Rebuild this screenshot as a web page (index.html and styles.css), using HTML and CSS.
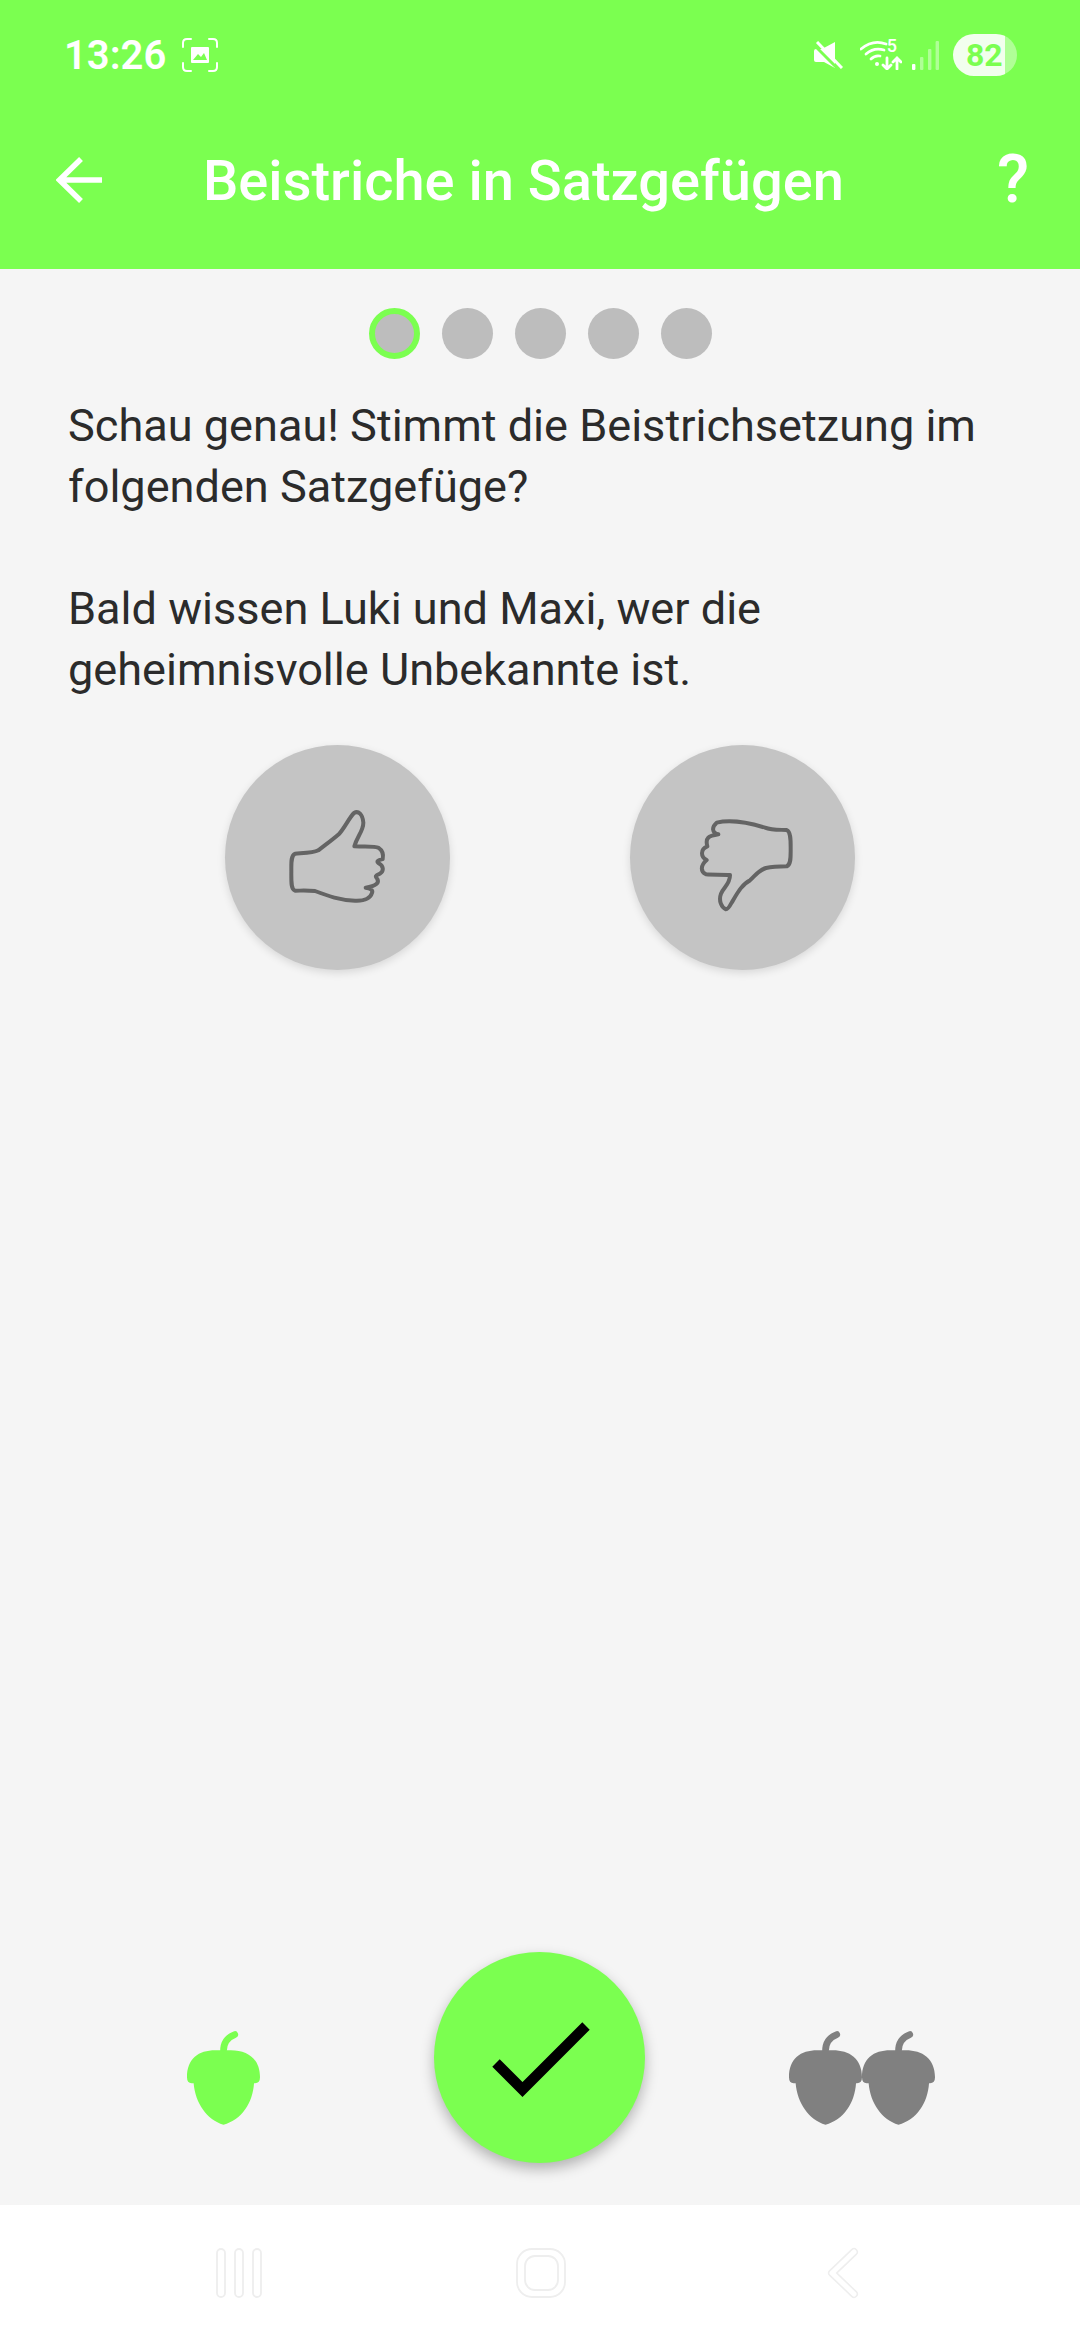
FILE: index.html
```html
<!DOCTYPE html>
<html lang="de">
<head>
	<meta charset="utf-8">
	<meta name="viewport" content="width=device-width, initial-scale=1">
	<title>Beistriche in Satzgefügen</title>
	<link rel="stylesheet" href="styles.css">
</head>
<body>
<svg class="defs" width="0" height="0">
	<symbol id="acorn" viewBox="80 300 220 285">
		<path d="M190 362Q190 326 224 313" fill="none" stroke="currentColor" stroke-width="20" stroke-linecap="round"/>
		<path d="M80 442C80 385 115 360 165 360H212C262 360 300 385 300 442Q300 460 285 460H282C278 520 245 570 190 585C140 570 105 520 100 460H94Q80 460 80 442Z" fill="currentColor"/>
	</symbol>
</svg>

<header class="top">
	<div class="status">
		<span class="time">13:26</span>
		<svg class="shot" viewBox="0 0 36 34" fill="none" stroke="#fff">
			<path d="M1 9V5Q1 1 5 1H9M27 1H31Q35 1 35 5V9M1 25V29Q1 33 5 33H9M27 33H31Q35 33 35 29V25" stroke-width="2" stroke-linecap="round"/>
			<path d="M9 10Q9 9 10 9H26Q27 9 27 10V24Q27 25 26 25H10Q9 25 9 24Z" fill="#fff" stroke="none"/>
			<path d="M11 22L16 16L19 19L22 15L25 22Z" fill="#7bff50" stroke="none"/>
		</svg>
		<div class="status-right">
			<svg class="mute" viewBox="0 0 29 28">
				<path d="M0 10Q0 8 2 8H8L21 1V27L10 21H2Q0 21 0 19Z" fill="#fff"/>
				<path d="M1 3L23 25" stroke="#7bff50" stroke-width="3" transform="translate(-1 1)"/>
				<path d="M3 1L28 27" stroke="#fff" stroke-width="3"/>
			</svg>
			<div class="wifi">
				<svg viewBox="0 0 42 30" fill="none" stroke="#fff" stroke-width="2.800" stroke-linecap="round">
					<path d="M1 9Q13 -1 26 4"/>
					<path d="M6 14Q14 7 24 10"/>
					<path d="M11 19Q15 15 20 16"/>
					<circle cx="17" cy="24" r="2" fill="#fff" stroke="none"/>
					<path d="M27 18V29M23 25L27 29L31 25"/>
					<path d="M37 29V18M33 22L37 18L41 22"/>
				</svg>
				<span class="wifi-gen">5</span>
			</div>
			<svg class="signal" viewBox="0 0 27 29" fill="#fff">
				<rect x="0" y="23" width="3.400" height="6" rx="1"/>
				<rect x="8" y="16" width="3.400" height="13" rx="1" opacity="0.4"/>
				<rect x="16" y="8" width="3.400" height="21" rx="1" opacity="0.4"/>
				<rect x="23.600" y="0" width="3.400" height="29" rx="1" opacity="0.4"/>
			</svg>
			<div class="battery">82</div>
		</div>
	</div>
	<div class="appbar">
		<svg class="back" viewBox="0 0 46 46" fill="none" stroke="#fff" stroke-width="5.500">
			<path d="M46 23H4M25 2L3.500 23L25 44"/>
		</svg>
		<h1 class="title">Beistriche in Satzgefügen</h1>
		<span class="help">?</span>
	</div>
</header>

<main class="content">
	<div class="dots">
		<span class="dot active"></span>
		<span class="dot"></span>
		<span class="dot"></span>
		<span class="dot"></span>
		<span class="dot"></span>
	</div>
	<p class="question">Schau genau! Stimmt die Beistrichsetzung im folgenden Satzgefüge?</p>
	<p class="question">Bald wissen Luki und Maxi, wer die geheimnisvolle Unbekannte ist.</p>
	<div class="answers">
		<button class="answer">
			<svg viewBox="75 72 675 675" fill="none" stroke="#646464" stroke-width="12" stroke-linejoin="round">
				<path d="M285 398C310 396 340 396 355 388C375 372 395 358 418 338C435 318 448 290 462 276C475 268 488 280 490 305C490 330 472 345 463 376C490 377 525 374 535 380C550 390 550 405 548 414C535 418 528 420 535 426C552 435 552 450 540 458C525 464 525 466 532 474C538 485 530 495 497 500C510 502 520 506 516 516C510 535 490 540 465 539C420 538 385 525 345 510C325 508 305 509 285 509C272 505 274 480 274 450C274 425 272 405 285 398Z"/>
			</svg>
		</button>
		<button class="answer">
			<svg viewBox="60 72 675 675" fill="none" stroke="#646464" stroke-width="12" stroke-linejoin="round">
				<path d="M320 305C350 298 400 300 465 320C485 328 510 326 530 327C543 332 542 360 542 385C542 410 543 430 530 436C510 436 490 436 468 441C445 448 435 465 420 478C395 490 380 520 365 545C358 558 352 565 348 565C335 560 325 540 333 518C340 500 360 490 360 462C335 460 310 462 288 460C272 452 270 435 290 417C272 408 270 385 292 376C285 350 295 345 325 340C305 336 305 318 320 305Z"/>
			</svg>
		</button>
	</div>
</main>

<div class="actions">
	<svg class="acorn earned"><use href="#acorn"/></svg>
	<button class="check">
		<svg viewBox="0 0 211 211" fill="none" stroke="#000" stroke-width="10.500">
			<path d="M62 64L88.500 90.500L152 27" transform="translate(0 47)"/>
		</svg>
	</button>
	<div class="acorn-pair">
		<svg class="acorn"><use href="#acorn"/></svg>
		<svg class="acorn"><use href="#acorn"/></svg>
	</div>
</div>

<nav class="navbar">
	<svg class="nav-recent" viewBox="0 0 46 50" fill="none" stroke="#eee" stroke-width="1.800">
		<rect x="1" y="1" width="8" height="48" rx="4"/>
		<rect x="19" y="1" width="8" height="48" rx="4"/>
		<rect x="37" y="1" width="8" height="48" rx="4"/>
	</svg>
	<svg class="nav-home" viewBox="0 0 50 50" fill="none" stroke="#eee" stroke-width="1.800">
		<rect x="1" y="1" width="48" height="48" rx="15"/>
		<rect x="9" y="8" width="33" height="34" rx="10"/>
	</svg>
	<svg class="nav-back" viewBox="0 0 32 52" fill="none" stroke-linecap="round" stroke-linejoin="round">
		<path d="M27 5L5 26L27 47" stroke="#eee" stroke-width="8"/>
		<path d="M27 5L5 26L27 47" stroke="#fff" stroke-width="5"/>
	</svg>
</nav>
</body>
</html>
```

FILE: styles.css
```css
:root
{
	--green: #7bff50;
}

html,
body
{
	padding: 0;
	margin: 0;
}

body
{
	display: flex;
	flex-direction: column;
	width: 1080px;
	height: 2340px;
	overflow: hidden;
	background: #f5f5f5;
	color: #2b2b2b;
	font-family: Roboto, "Noto Sans", sans-serif;
}

.defs
{
	position: absolute;
}

button
{
	padding: 0;
	border: 0;
	cursor: pointer;
}

svg
{
	display: block;
	flex: none;
}

/* top */
.top
{
	height: 269px;
	background: var(--green);
	color: #fff;
}

.status
{
	display: flex;
	align-items: center;
	height: 110px;
	padding: 0 63px 0 64px;
}

.time
{
	width: 100px;
	font-size: 40px;
	font-weight: 600;
	white-space: nowrap;
}

.shot
{
	width: 36px;
	height: 34px;
	margin-left: 18px;
}

.status-right
{
	display: flex;
	align-items: center;
	margin-left: auto;
}

.mute
{
	width: 29px;
	height: 28px;
}

.wifi
{
	position: relative;
	width: 42px;
	height: 30px;
	margin-left: 17px;
}

.wifi-gen
{
	position: absolute;
	top: -5px;
	right: 5px;
	font-size: 18px;
	font-weight: 500;
}

.signal
{
	width: 27px;
	height: 29px;
	margin-left: 10px;
}

.battery
{
	width: 64px;
	height: 42px;
	margin-left: 14px;
	border-radius: 21px;
	background: linear-gradient(to right, rgb(255 255 255 / 90%) 52px, rgb(255 255 255 / 40%) 52px);
	color: var(--green);
	font-size: 32px;
	font-weight: 700;
	line-height: 42px;
	text-indent: 13px;
}

.appbar
{
	display: flex;
	align-items: center;
	height: 139px;
	padding: 0 51px 20px 56px;
}

.back
{
	width: 46px;
	height: 46px;
}

.title
{
	margin: 2px 0 0 101px;
	font-size: 56px;
	font-weight: 500;
	white-space: nowrap;
}

.help
{
	margin-left: auto;
	font-size: 66px;
	font-weight: 500;
	line-height: 1;
}

/* question */
.content
{
	flex: 1;
	padding-top: 39px;
}

.dots
{
	display: flex;
	justify-content: center;
	gap: 22px;
	margin-bottom: 36px;
}

.dot
{
	box-sizing: border-box;
	width: 51px;
	height: 51px;
	border-radius: 50%;
	background: #bdbdbd;
}

.dot.active
{
	border: 6px solid var(--green);
}

.question
{
	width: 940px;
	margin: 0 0 61px 68px;
	font-size: 45.1px;
	line-height: 61px;
}

.answers
{
	display: flex;
	justify-content: center;
	gap: 180px;
	margin-top: -16px;
}

.answer
{
	width: 225px;
	height: 225px;
	border-radius: 50%;
	background: #c4c4c4;
	box-shadow: 0 3px 8px rgb(0 0 0 / 12%);
}

/* bottom */
.actions
{
	display: flex;
	align-items: center;
	padding: 0 0 42px 187px;
}

.acorn
{
	width: 73px;
	height: 95px;
	color: #808080;
}

.acorn.earned
{
	color: var(--green);
	margin-top: 40px;
}

.check
{
	width: 211px;
	height: 211px;
	margin-left: 174px;
	border-radius: 50%;
	background: var(--green);
	box-shadow: 0 6px 14px rgb(0 0 0 / 28%);
}

.acorn-pair
{
	display: flex;
	margin-left: 144px;
	margin-top: 40px;
}

.navbar
{
	display: flex;
	align-items: center;
	height: 135px;
	padding-left: 216px;
	background: #fff;
}

.nav-recent
{
	width: 46px;
	height: 50px;
}

.nav-home
{
	width: 50px;
	height: 50px;
	margin-left: 254px;
}

.nav-back
{
	width: 32px;
	height: 52px;
	margin-left: 261px;
}
```
